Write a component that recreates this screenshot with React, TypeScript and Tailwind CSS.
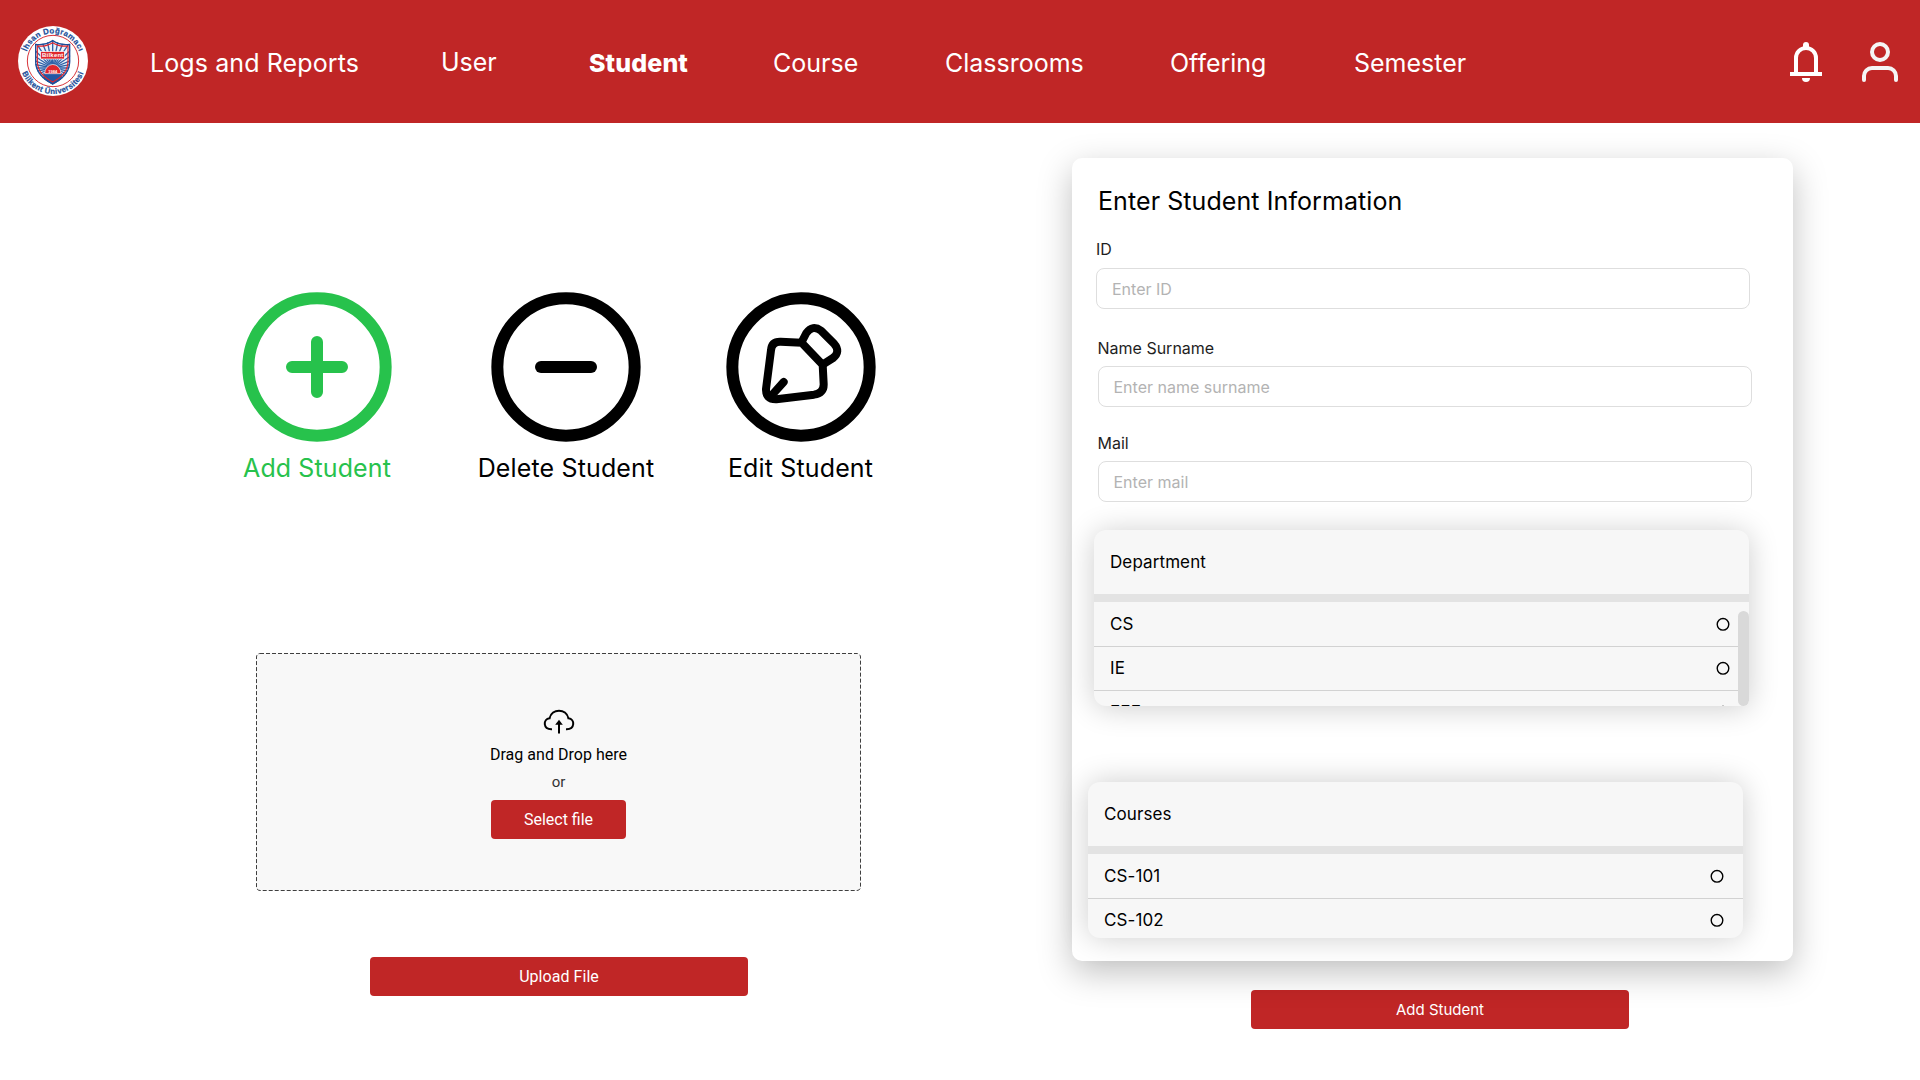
import type { ReactNode } from "react";

function Logo() {
  return (
    <svg viewBox="54 79 210 210" className="h-[70px] w-[70px]">
      <defs>
        <path id="logo-top" d="M76 184 a83 83 0 0 1 166 0" />
        <path id="logo-bottom" d="M60 184 a99 99 0 0 0 198 0" />
        <clipPath id="logo-shield">
          <path d="M105 133 Q135 136 158 121 Q181 136 211 133 V188 Q209 230 158 255 Q107 230 105 188 Z" />
        </clipPath>
      </defs>
      <circle cx="159" cy="184" r="105" fill="#fff" />
      <circle cx="159" cy="184" r="77" fill="none" stroke="#d8343a" strokeWidth="3" />
      <g
        fill="#1d4f9a"
        stroke="#1d4f9a"
        strokeWidth="0.6"
        fontFamily="Liberation Sans, Arial, sans-serif"
        fontWeight="700"
        fontSize="23.5"
        textAnchor="middle"
        letterSpacing="1"
      >
        <text>
          <textPath href="#logo-top" startOffset="50%">İhsan Doğramacı</textPath>
        </text>
        <text>
          <textPath href="#logo-bottom" startOffset="50%">Bilkent Üniversitesi</textPath>
        </text>
      </g>
      <g clipPath="url(#logo-shield)">
        <rect x="100" y="115" width="120" height="145" fill="#eef3fa" />
        <g stroke="#2f62a8" strokeWidth="4">
          {Array.from({ length: 32 }, (_, i) => {
            const a = (i / 32) * Math.PI * 2;
            return <line key={i} x1="158" y1="205" x2={158 + 110 * Math.cos(a)} y2={205 + 110 * Math.sin(a)} />;
          })}
        </g>
        <path d="M132 222 H185 V260 H132 Z" fill="#2257a4" />
        <path d="M134 222 a24 27 0 0 1 49 0 Z" fill="#e0262c" stroke="#fff" strokeWidth="2" />
      </g>
      <path
        d="M107 134 Q135 138 158 123 Q181 138 209 134 V188 Q207 229 158 253 Q109 229 107 188 Z"
        fill="none"
        stroke="#1d4f9a"
        strokeWidth="4"
      />
      <path
        d="M112 139 Q137 142 158 129 Q179 142 204 139 V188 Q202 225 158 247 Q114 225 112 188 Z"
        fill="none"
        stroke="#e0262c"
        strokeWidth="3.5"
      />
      <rect x="122" y="156" width="71" height="22" fill="#e0262c" stroke="#fff" strokeWidth="2" />
      <g fill="#fff" fontFamily="Liberation Sans, Arial, sans-serif" fontWeight="700" textAnchor="middle">
        <text x="158" y="173" fontSize="18" textLength="64">Bilkent</text>
        <text x="158" y="219" fontSize="12">1984</text>
      </g>
    </svg>
  );
}

function BellIcon() {
  return (
    <svg viewBox="84 60 108 132" className="h-11 w-9" fill="#fff">
      <path d="M108 158 V114 a30 30 0 0 1 60 0 V158" fill="none" stroke="#fff" strokeWidth="12" />
      <circle cx="138" cy="75" r="9" />
      <rect x="129" y="75" width="18" height="9" />
      <rect x="90" y="156" width="96" height="12" />
      <path d="M126 174 h24 a12 12 0 0 1 -24 0 Z" />
    </svg>
  );
}

function UserIcon() {
  return (
    <svg viewBox="300 60 120 132" className="h-11 w-10" fill="none" stroke="#f5f5f5" strokeWidth="12" strokeLinecap="round">
      <circle cx="360" cy="96" r="24" />
      <path d="M312 180 V168 a24 24 0 0 1 24 -24 h48 a24 24 0 0 1 24 24 v12" />
    </svg>
  );
}

function CircleIcon({ children }: { children: ReactNode }) {
  return (
    <svg viewBox="0 0 450 450" className="h-[150px] w-[150px]" fill="none" stroke="currentColor" strokeLinecap="round" strokeLinejoin="round">
      <circle cx="225" cy="225" r="206" strokeWidth="36" />
      {children}
    </svg>
  );
}

function CloudIcon() {
  return (
    <svg viewBox="0 0 32 26" className="h-[26px] w-8" fill="none" stroke="#000" strokeWidth="2">
      <path d="M9 20.2 C-0.2 20.6 -0.2 10.2 6.6 9.3 C8.6 -0.9 23.4 -0.9 25.4 9.3 C32.2 10.2 32.2 20.6 23 20.2" />
      <path d="M16 15 V24.4" />
      <path d="M16 10.8 L19.8 15.8 H12.2 Z" fill="#000" stroke="none" />
    </svg>
  );
}

function Field({ label, placeholder, className }: { label: string; placeholder: string; className: string }) {
  return (
    <label className={`block w-[654px] ${className}`}>
      <span className="block pl-px text-[16px] leading-5 text-[#1e1e1e]">{label}</span>
      <input
        placeholder={placeholder}
        className="mt-2 block h-[41px] w-full rounded-lg border border-[#dedede] bg-white px-[15px] text-[16px] leading-5 placeholder:text-[#b3b3b3]"
      />
    </label>
  );
}

function Radio() {
  return (
    <svg viewBox="0 0 14 14" className="h-[14px] w-[14px]" fill="none" stroke="#000" strokeWidth="1.4">
      <circle cx="7" cy="7.3" r="5.8" />
    </svg>
  );
}

function Picker({ title, rows, className, scroll }: { title: string; rows: string[]; className: string; scroll?: boolean }) {
  return (
    <div
      className={`relative w-[655px] overflow-hidden rounded-xl bg-[#f7f7f7] text-[17px] leading-5 tracking-[0.1px] text-black ${className}`}
    >
      <div className="flex h-[72px] items-center border-b-8 border-[#e3e3e3] px-4">{title}</div>
      {rows.map((row) => (
        <div
          key={row}
          className="flex h-11 items-center justify-between border-t border-[#d2d2d2] pr-[19px] pb-[2px] pl-4 nth-2:border-t-0 nth-2:pb-0"
        >
          <span>{row}</span>
          <Radio />
        </div>
      ))}
      {scroll && <div className="absolute right-0 bottom-0 h-[95px] w-[11px] rounded-full bg-[#d9d9d9]" />}
    </div>
  );
}

export default function App() {
  return (
    <div className="flex h-[1080px] w-[1920px] flex-col overflow-hidden bg-white font-['Inter',sans-serif]">
      <header className="flex h-[123px] shrink-0 bg-[#c02626] text-white">
        <div className="w-[150px] pt-[26px] pl-[18px]">
          <Logo />
        </div>
        <nav className="flex pt-12 text-[25px] leading-[30px]">
          <a className="w-[291px] tracking-[0.1px]">Logs and Reports</a>
          <a className="-mt-px w-[148px]">User</a>
          <a className="w-[184px] font-extrabold tracking-[0.1px]">Student</a>
          <a className="w-[172px]">Course</a>
          <a className="w-[225px]">Classrooms</a>
          <a className="w-[184px]">Offering</a>
          <a>Semester</a>
        </nav>
        <div className="ml-auto flex gap-9 pt-10 pr-5">
          <BellIcon />
          <UserIcon />
        </div>
      </header>

      <main className="flex flex-1">
        <section className="flex w-[1072px] flex-col">
          <div className="flex pt-[169px] pl-[237px] text-[25px] leading-[30px] text-black">
            <button className="flex w-40 flex-col items-center gap-[11px] tracking-[0.1px] text-[#27c24c]">
              <CircleIcon>
                <path d="M150 225 H300 M225 150 V300" strokeWidth="36" />
              </CircleIcon>
              <span>Add Student</span>
            </button>
            <button className="ml-[79px] flex w-[180px] flex-col items-center gap-[11px] tracking-[0.15px]">
              <CircleIcon>
                <path d="M150 225 H300" strokeWidth="36" />
              </CircleIcon>
              <span>Delete Student</span>
            </button>
            <button className="ml-[69px] flex w-[151px] flex-col items-center gap-[11px] tracking-[0.15px]">
              <CircleIcon>
                <g transform="translate(-256 -67)" strokeWidth="24">
                  <path d="M483 219 L420 216 Q393 215 391 242 L376 358 Q375 390 407 389 L520 375 Q550 370 549 343 L546 285 Z" />
                  <path d="M483 217 L497 190 Q516 164 541 183 L580 222 Q601 246 577 265 L547 284" />
                  <path d="M395 375 L429 337" />
                </g>
              </CircleIcon>
              <span>Edit Student</span>
            </button>
          </div>

          <div className="relative mt-[170px] ml-64 flex h-[238px] w-[605px] flex-col items-center rounded-[4px] bg-[#f8f8f8] pt-14 font-['Roboto',sans-serif] text-[16px] leading-5">
            <svg className="absolute inset-0 h-full w-full" fill="none" stroke="#3f3f3f" strokeDasharray="4 2">
              <rect x="0.5" y="0.5" width="604" height="237" rx="3.5" />
            </svg>
            <CloudIcon />
            <p className="mt-[10px] tracking-[0.03px] text-black">Drag and Drop here</p>
            <p className="mt-[7px] text-[15px] text-[#333]">or</p>
            <button className="mt-2 h-[39px] w-[135px] rounded-[4px] bg-[#c02626] text-white">Select file</button>
          </div>
          <button className="mt-[66px] ml-[370px] h-[39px] w-[378px] rounded-[4px] bg-[#c02626] font-['Roboto',sans-serif] text-[16px] tracking-[0.05px] text-white">
            Upload File
          </button>
        </section>

        <section className="flex flex-col pt-[35px]">
          <form className="relative z-10 flex h-[803px] w-[721px] flex-col rounded-[10px] bg-white pt-7 shadow-[0_11px_34px_rgba(0,0,0,0.25)]">
            <h1 className="pl-[26px] text-[25px] leading-[30px] tracking-[0.08px] text-black">Enter Student Information</h1>
            <Field label="ID" placeholder="Enter ID" className="mt-[23px] ml-6 [&>input]:mt-[9px] [&>span]:pl-0" />
            <Field label="Name Surname" placeholder="Enter name surname" className="mt-[29px] ml-[25.5px] [&>span]:pl-0" />
            <Field label="Mail" placeholder="Enter mail" className="mt-[26px] ml-[25.5px] [&>span]:pl-0" />
            <Picker
              title="Department"
              rows={["CS", "IE", "EEE"]}
              scroll
              className="mt-7 ml-[22px] h-44 rounded-br-[5.5px] shadow-[0_2px_30px_rgba(0,0,0,0.2)]"
            />
            <Picker
              title="Courses"
              rows={["CS-101", "CS-102"]}
              className="mt-[76px] ml-4 h-[156px] shadow-[0_0_30px_rgba(0,0,0,0.2)]"
            />
          </form>
          <button className="mt-[29px] ml-[179px] h-[39px] w-[378px] rounded-[4px] bg-[#c02626] pt-px text-[15px] text-white">
            Add Student
          </button>
        </section>
      </main>
    </div>
  );
}
